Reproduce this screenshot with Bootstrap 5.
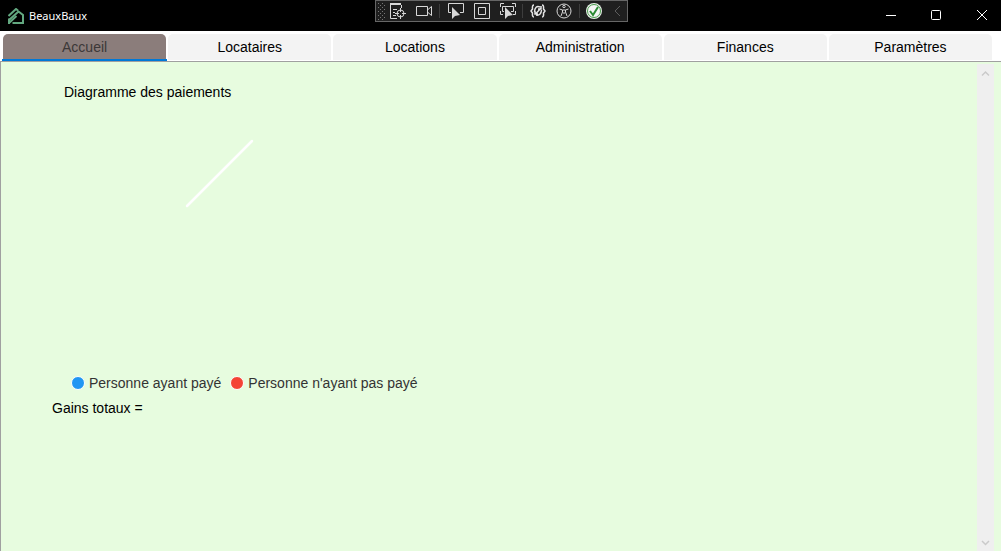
<!DOCTYPE html>
<html lang="fr">
<head>
<meta charset="utf-8">
<meta name="viewport" content="width=device-width, initial-scale=1">
<title>BeauxBaux</title>
<link href="https://cdn.jsdelivr.net/npm/bootstrap@5.3.0/dist/css/bootstrap.min.css" rel="stylesheet">
<script src="https://cdn.jsdelivr.net/npm/bootstrap@5.3.0/dist/js/bootstrap.bundle.min.js" defer></script>
<style>
body { font-family: "Liberation Sans", Arial, sans-serif; font-size: 14px; line-height: 20px; color: #000; background: #fff; }
svg { display: block; fill: none; }
.title-bar { height: 31px; background: #000; color: #fff; }
.app-name { font: 11px/16px "Noto Sans", sans-serif; padding-left: 5px; }
.win-btn { width: 46px; height: 31px; color: #fff; }
.win-btn.close-win { width: 42px; }
.debug-bar { left: 37.5%; height: 22px; background: #1f1f1f; border: 1px solid #666; }
.debug-bar button { width: 26px; height: 20px; }
.debug-bar .fold { width: 19px; }
.grip { width: 9px; height: 20px; }
.sep { width: 5px; height: 20px; }
.sep::before { content: ""; display: block; width: 1px; height: 14px; margin: 3px auto; background: #3d3d3d; }
.tab-row { height: 31px; padding: 3px 8px 0 2px; border-bottom: 1px solid #a0a0a0; }
.tab-row .nav-item { height: 27px; padding: 0 1px; }
.tab-row .nav-link { height: 26px; padding: 3px 0; color: #000; background: #f3f3f3; border-radius: 5px 5px 0 0; line-height: 20px; }
.tab-row .nav-link.active { height: 25px; color: #3c3838; background: #8b7d7b; }
.tab-row .current { border-bottom: 2px solid #0078d7; }
.page-body { background: #e7fcdf; border-left: 1px solid #a0a0a0; padding: 2px 7px 0 0; }
.content-area { padding: 18px 0 0 51px; }
.chart-title { padding-left: 12px; }
.chart { height: 271px; padding: 37px 0 0 132px; }
.legend { padding-left: 19px; color: #333; gap: 9px; }
.legend li { gap: 4px; }
.dot { width: 14px; height: 14px; border: 1px solid #fff; border-radius: 50%; }
.paid { background: #2196f3; }
.unpaid { background: #f44336; }
.total { margin-top: 5px; }
.scroll-strip { width: 17px; background: #efefef; padding: 5px 0 4px; }
.scroll-strip svg { stroke: #cacaca; stroke-width: 1.5; }
</style>
</head>
<body class="d-flex flex-column vh-100 overflow-hidden">
<header class="title-bar d-flex align-items-center flex-shrink-0 position-relative">
  <div class="d-flex align-items-center flex-grow-1 ps-2">
    <svg width="16" height="16" viewBox="0 0 16 16" stroke="#63a880" stroke-width="2"><path d="M.5 8 8 1l2 1.500M.5 12.500 10.500 3.500 15 7v8H4.500"/><path d="M1 10.500V16M.5 15.500 8.500 8"/></svg>
    <span class="app-name">BeauxBaux</span>
  </div>
  <div class="debug-bar d-flex position-absolute top-0">
    <span class="grip"><svg width="9" height="20"><defs><pattern id="dots" width="4" height="4" patternUnits="userSpaceOnUse"><path fill="#777" d="M0 0h1v1H0zM2 2h1v1H2z"/></pattern></defs><rect x="2" y="1" width="7" height="18" fill="url(#dots)"/></svg></span>
    <button class="btn p-0 border-0 rounded-0" aria-label="Arborescence visuelle"><svg width="26" height="20" stroke="#d8d8d8"><path d="M5 3.500h11M5 2.500h11M16.500 4v3M5.500 4v13.500H12M8 8.500h4M8 11.500h2M8 14.500h3"/><circle cx="15.500" cy="12.500" r="3.500"/><path d="M15.500 7v4M15.500 14v4M10 12.500h4M17 12.500h4"/></svg></button>
    <button class="btn p-0 border-0 rounded-0" aria-label="Caméra"><svg width="26" height="20" stroke="#d8d8d8"><path d="M5.500 5.500h11v9h-11zM17 8.500 20.500 5.500v9l-3.500-3"/></svg></button>
    <span class="sep"></span>
    <button class="btn p-0 border-0 rounded-0" aria-label="Sélectionner un élément"><svg width="26" height="20" stroke="#d8d8d8"><path d="M9 11.500H6.500v-9h15v9H18"/><path fill="#d8d8d8" stroke="none" d="M10 6v12l3-3 5-1z"/></svg></button>
    <button class="btn p-0 border-0 rounded-0" aria-label="Ornements de disposition"><svg width="26" height="20" stroke="#d8d8d8"><path d="M6.500 2.500h15v15h-15zM10.500 6.500h7v7h-7z"/></svg></button>
    <button class="btn p-0 border-0 rounded-0" aria-label="Élément avec focus"><svg width="26" height="20" stroke="#d8d8d8"><path d="M6.500 6V2.500H10M18 2.500h3.500V6M21.500 10v3.500H19M9 13.500H6.500V10M10 10.500H8.500v-5h11v5H17"/><path fill="#d8d8d8" stroke="none" d="M11 6v12l3-3 5-1z"/></svg></button>
    <span class="sep"></span>
    <button class="btn p-0 border-0 rounded-0" aria-label="Rechargement à chaud"><svg width="26" height="20" stroke="#e4e4e4" stroke-width="1.500"><path d="M9 4Q7 4 7.500 8L6 10l1.500 2Q7 16 9 16M17 4q2 0 1.500 4L20 10l-1.500 2q.5 4-1.500 4"/><path d="M15 6Q10 4 9.500 11M11 14q5 1 5.500-5M10.500 13l5.500-6M10 10v3h3M16 5v3h-3"/></svg></button>
    <button class="btn p-0 border-0 rounded-0" aria-label="Accessibilité"><svg width="26" height="20" stroke="#d8d8d8"><circle cx="13" cy="10" r="7"/><circle cx="13" cy="5.500" r="1.200"/><path d="M8.500 8l3 1v2L10 15M17.500 8l-3 1v2l1.500 4M11.500 9h3M12 12h2"/></svg></button>
    <span class="sep"></span>
    <button class="btn p-0 border-0 rounded-0" aria-label="Liaisons valides"><svg width="26" height="20"><circle cx="12" cy="10" r="8" fill="#e8f0e8"/><circle cx="12" cy="10" r="6.500" stroke="#4b9b4e" fill="#f5f5f5"/><path d="M8 10l3 4 5-8" stroke="#2c8a34" stroke-width="2"/></svg></button>
    <button class="btn fold p-0 border-0 rounded-0" aria-label="Réduire"><svg width="19" height="20" stroke="#5c5c5c"><path d="M12 5 7 10l5 5"/></svg></button>
  </div>
  <button class="btn win-btn p-0 border-0 rounded-0" aria-label="Réduire la fenêtre"><svg width="46" height="31" stroke="#fff"><path d="M19 15.500h10"/></svg></button>
  <button class="btn win-btn p-0 border-0 rounded-0" aria-label="Agrandir"><svg width="46" height="31" stroke="#fff"><rect x="18.500" y="10.500" width="9" height="9" rx="1"/></svg></button>
  <button class="btn win-btn close-win p-0 border-0 rounded-0" aria-label="Fermer"><svg width="42" height="31" stroke="#fff"><path d="M18 10l10 10M28 10 18 20"/></svg></button>
</header>
<nav class="flex-shrink-0">
  <ul class="nav nav-justified tab-row flex-nowrap">
    <li class="nav-item current"><a class="nav-link active" aria-current="page" href="#accueil">Accueil</a></li>
    <li class="nav-item"><a class="nav-link" href="#locataires">Locataires</a></li>
    <li class="nav-item"><a class="nav-link" href="#locations">Locations</a></li>
    <li class="nav-item"><a class="nav-link" href="#administration">Administration</a></li>
    <li class="nav-item"><a class="nav-link" href="#finances">Finances</a></li>
    <li class="nav-item"><a class="nav-link" href="#parametres">Paramètres</a></li>
  </ul>
</nav>
<main class="page-body d-flex flex-grow-1" id="accueil">
  <div class="content-area flex-grow-1">
    <div class="chart-title">Diagramme des paiements</div>
    <div class="chart"><svg width="72" height="72"><path d="M3 67 68 2" stroke="#fff" stroke-width="2.500" stroke-linecap="round"/></svg></div>
    <ul class="legend list-unstyled d-flex mb-0">
      <li class="d-flex align-items-center"><span class="dot paid"></span>Personne ayant payé</li>
      <li class="d-flex align-items-center"><span class="dot unpaid"></span>Personne n'ayant pas payé</li>
    </ul>
    <div class="total">Gains totaux =</div>
  </div>
  <div class="scroll-strip d-flex flex-column justify-content-between flex-shrink-0">
    <svg width="17" height="8"><path d="M5 6.500 8.500 3 12 6.500"/></svg>
    <svg width="17" height="8"><path d="M5 2 8.500 5.500 12 2"/></svg>
  </div>
</main>
</body>
</html>
